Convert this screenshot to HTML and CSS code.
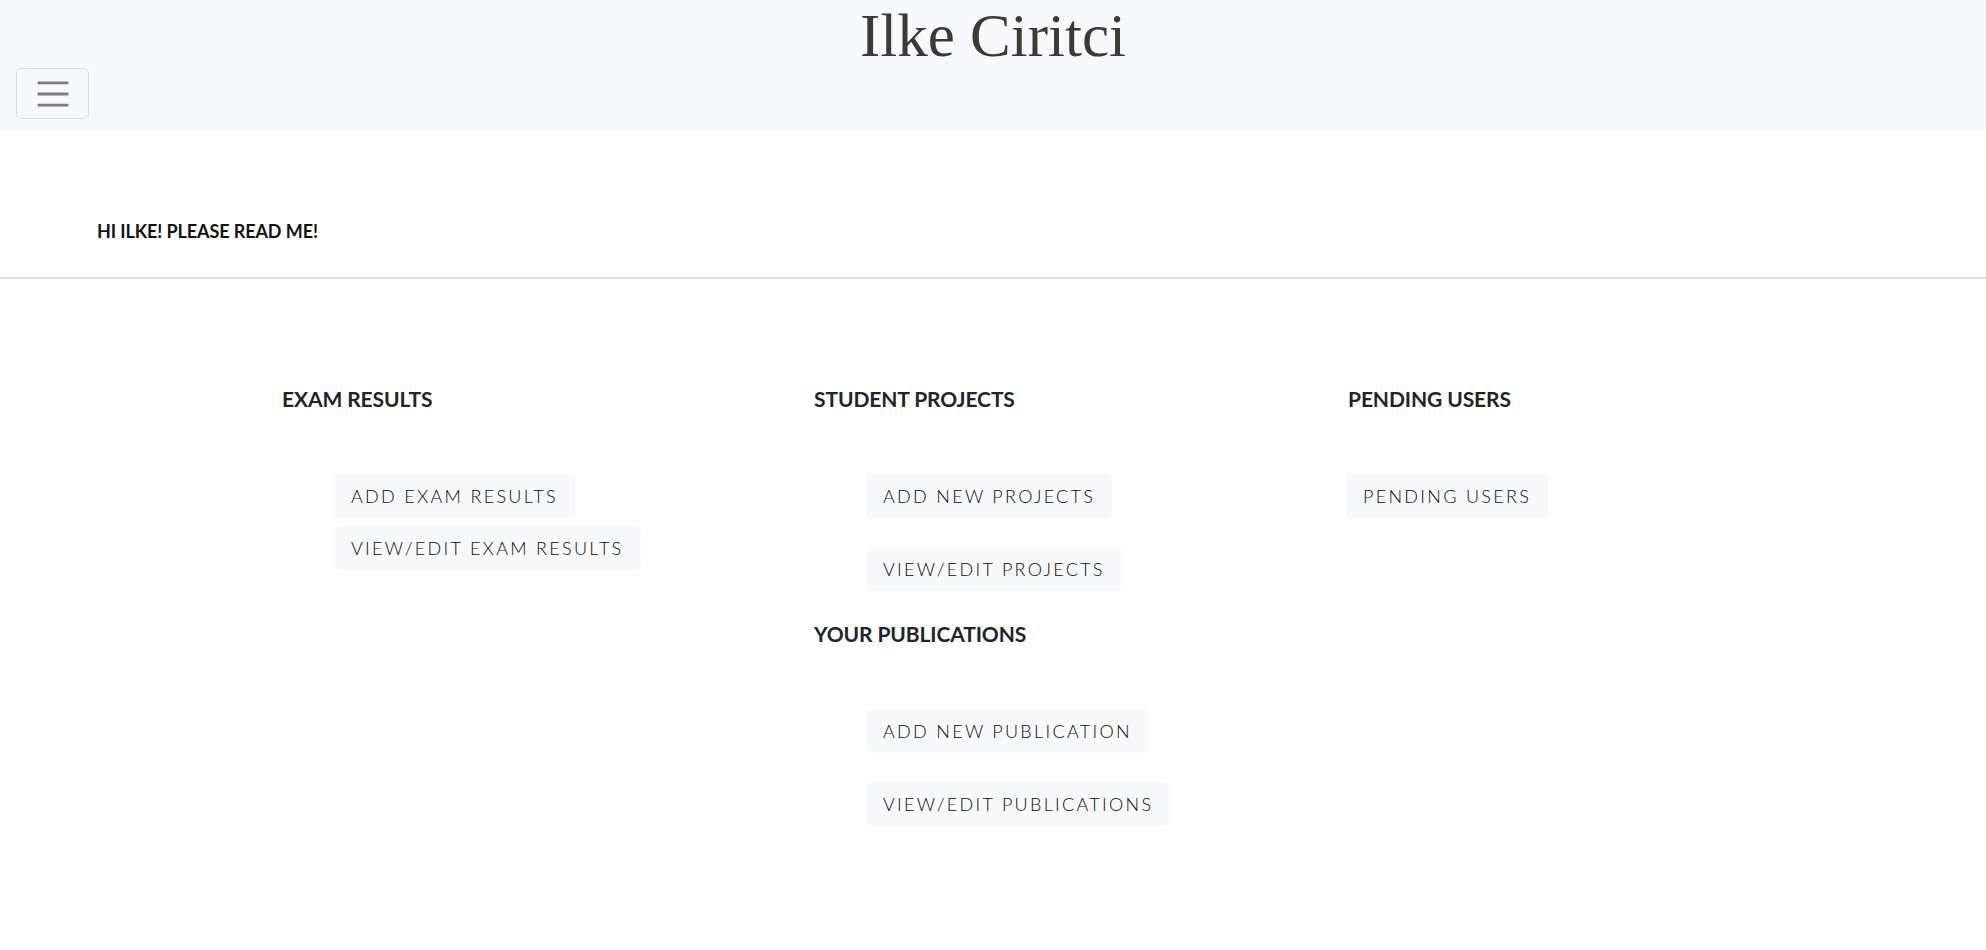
FILE: index.html
```html
<!DOCTYPE html>
<html lang="en">
<head>
<meta charset="utf-8">
<title>Ilke Ciritci</title>
<link rel="stylesheet" href="styles.css">
</head>
<body>
<nav class="navbar">
  <div class="brand">Ilke Ciritci</div>
  <button class="toggler" type="button" aria-label="Toggle navigation">
    <svg class="toggler-icon" viewBox="0 0 30 30" width="42" height="42" aria-hidden="true">
      <path d="M4 7h22M4 15h22M4 23h22" stroke="rgba(0,0,0,0.5)" stroke-width="2" stroke-linecap="butt" fill="none"/>
    </svg>
  </button>
</nav>

<main>
  <section class="intro">
    <p class="readme">HI ILKE! PLEASE READ ME!</p>
  </section>
  <hr class="divider">

  <section class="dashboard">
    <div class="col">
      <h2 class="col-title">EXAM RESULTS</h2>
      <div class="btn-list tight">
        <a class="btn" href="#">ADD EXAM RESULTS</a>
        <a class="btn" href="#">VIEW/EDIT EXAM RESULTS</a>
      </div>
    </div>
    <div class="col">
      <h2 class="col-title">STUDENT PROJECTS</h2>
      <div class="btn-list">
        <a class="btn" href="#">ADD NEW PROJECTS</a>
        <a class="btn" href="#">VIEW/EDIT PROJECTS</a>
      </div>
      <h2 class="col-title second">YOUR PUBLICATIONS</h2>
      <div class="btn-list">
        <a class="btn" href="#">ADD NEW PUBLICATION</a>
        <a class="btn" href="#">VIEW/EDIT PUBLICATIONS</a>
      </div>
    </div>
    <div class="col">
      <h2 class="col-title">PENDING USERS</h2>
      <div class="btn-list flush">
        <a class="btn" href="#">PENDING USERS</a>
      </div>
    </div>
  </section>
</main>
</body>
</html>
```

FILE: styles.css
```css
* { box-sizing: border-box; }

html, body {
  margin: 0;
  padding: 0;
  background: #ffffff;
  font-family: "Lato", "Liberation Sans", sans-serif;
  color: #212529;
}

.navbar {
  background: #f8f9fc;
  padding: 4px 16px 12px 16px;
  height: 131px;
}

.brand {
  text-align: center;
  font-family: "Liberation Serif", "DejaVu Serif", serif;
  font-size: 61px;
  line-height: 64px;
  color: #3a3a36;
}

.toggler {
  display: block;
  width: 73px;
  height: 51px;
  padding: 4px 15px;
  background: transparent;
  border: 1px solid #dcdcdf;
  border-radius: 5px;
  margin: 0;
}

.toggler-icon {
  display: block;
  width: 42px;
  height: 42px;
}

.intro {
  padding: 89px 0 0 97px;
}

.readme {
  margin: 0;
  font-weight: 700;
  font-size: 18px;
  line-height: 22px;
  color: #111;
  letter-spacing: -0.1px;
}

.divider {
  margin: 35px 0 0 0;
  border: 0;
  border-top: 2px solid #dedede;
  height: 0;
}

.dashboard {
  display: grid;
  grid-template-columns: 532px 534px 1fr;
  padding: 108px 0 0 282px;
}

.col-title {
  margin: 0;
  font-size: 21px;
  line-height: 24px;
  font-weight: 700;
  color: #212529;
  letter-spacing: -0.1px;
}

.col-title.second {
  margin-top: 31px;
}

.btn-list {
  display: flex;
  flex-direction: column;
  align-items: flex-start;
  gap: 29px;
  margin-top: 63px;
  padding-left: 52px;
}

.btn-list.tight { gap: 8px; }
.btn-list.flush { padding-left: 0; margin-left: -2px; }

.btn {
  display: inline-block;
  background: #f8f9fa;
  color: #0d0d0d;
  text-decoration: none;
  font-family: "Lato", "Liberation Sans", sans-serif;
  font-weight: 300;
  font-size: 18px;
  line-height: 22px;
  letter-spacing: 2.3px;
  padding: 11px 17px 11px 17px;
  border-radius: 5px;
}
```
